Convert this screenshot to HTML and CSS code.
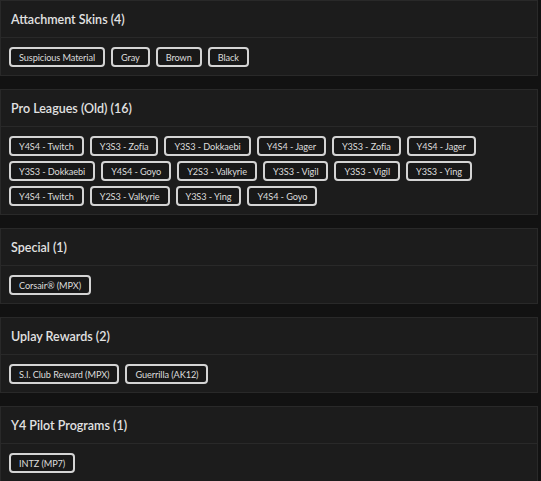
FILE: index.html
```html
<!DOCTYPE html>
<html lang="en">
<head>
    <meta charset="UTF-8">
    <meta name="viewport" content="width=device-width, initial-scale=1.0">
    <title>Skins</title>
    <link rel="stylesheet" href="styles.css">
</head>
<body>
    <div class="section">
        <div class="section-header">Attachment Skins (4)</div>
        <div class="section-body">
            <span class="pill">Suspicious Material</span>
            <span class="pill">Gray</span>
            <span class="pill">Brown</span>
            <span class="pill">Black</span>
        </div>
    </div>

    <div class="section">
        <div class="section-header">Pro Leagues (Old) (16)</div>
        <div class="section-body">
            <span class="pill">Y4S4 - Twitch</span>
            <span class="pill">Y3S3 - Zofia</span>
            <span class="pill">Y3S3 - Dokkaebi</span>
            <span class="pill">Y4S4 - Jager</span>
            <span class="pill">Y3S3 - Zofia</span>
            <span class="pill">Y4S4 - Jager</span>
            <span class="pill">Y3S3 - Dokkaebi</span>
            <span class="pill">Y4S4 - Goyo</span>
            <span class="pill">Y2S3 - Valkyrie</span>
            <span class="pill">Y3S3 - Vigil</span>
            <span class="pill">Y3S3 - Vigil</span>
            <span class="pill">Y3S3 - Ying</span>
            <span class="pill">Y4S4 - Twitch</span>
            <span class="pill">Y2S3 - Valkyrie</span>
            <span class="pill">Y3S3 - Ying</span>
            <span class="pill">Y4S4 - Goyo</span>
        </div>
    </div>

    <div class="section">
        <div class="section-header">Special (1)</div>
        <div class="section-body">
            <span class="pill">Corsair® (MPX)</span>
        </div>
    </div>

    <div class="section">
        <div class="section-header">Uplay Rewards (2)</div>
        <div class="section-body">
            <span class="pill">S.I. Club Reward (MPX)</span>
            <span class="pill">Guerrilla (AK12)</span>
        </div>
    </div>

    <div class="section">
        <div class="section-header">Y4 Pilot Programs (1)</div>
        <div class="section-body">
            <span class="pill">INTZ (MP7)</span>
        </div>
    </div>
</body>
</html>
```

FILE: styles.css
```css
* {
    box-sizing: border-box;
    margin: 0;
    padding: 0;
}

body {
    font-family: Lato, "Open Sans", Arial, sans-serif;
    background: #121212;
    color: #e2e2e2;
}

.section {
    width: 538px;
    background: #1c1c1c;
    border: 1px solid #292929;
    margin-bottom: 13px;
}

.section-header {
    height: 37px;
    padding: 0 10px;
    display: flex;
    align-items: center;
    font-size: 12.5px;
    font-weight: 600;
    border-bottom: 1px solid #292929;
}

.section-body {
    display: flex;
    flex-wrap: wrap;
    gap: 5px 6px;
    padding: 9px 8px 8px;
}

.pill {
    height: 20px;
    padding: 0 8px;
    display: inline-flex;
    align-items: center;
    font-size: 9.2px;
    letter-spacing: -0.1px;
    color: #dcdcdc;
    background: #181818;
    border: 2px solid #d4d4d4;
    border-radius: 4px;
}
```
